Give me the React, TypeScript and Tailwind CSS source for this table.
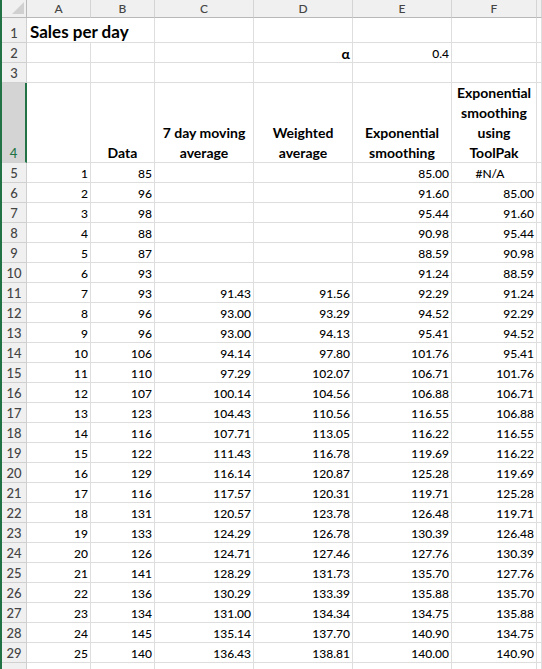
import React from "react"

const cols = ["A", "B", "C", "D", "E", "F", ""]

// day, data, 7 day avg, weighted, exp smoothing, toolpak
const rows: (string | number)[][] = [
  [1, 85, "", "", "85.00", "#N/A"],
  [2, 96, "", "", "91.60", "85.00"],
  [3, 98, "", "", "95.44", "91.60"],
  [4, 88, "", "", "90.98", "95.44"],
  [5, 87, "", "", "88.59", "90.98"],
  [6, 93, "", "", "91.24", "88.59"],
  [7, 93, "91.43", "91.56", "92.29", "91.24"],
  [8, 96, "93.00", "93.29", "94.52", "92.29"],
  [9, 96, "93.00", "94.13", "95.41", "94.52"],
  [10, 106, "94.14", "97.80", "101.76", "95.41"],
  [11, 110, "97.29", "102.07", "106.71", "101.76"],
  [12, 107, "100.14", "104.56", "106.88", "106.71"],
  [13, 123, "104.43", "110.56", "116.55", "106.88"],
  [14, 116, "107.71", "113.05", "116.22", "116.55"],
  [15, 122, "111.43", "116.78", "119.69", "116.22"],
  [16, 129, "116.14", "120.87", "125.28", "119.69"],
  [17, 116, "117.57", "120.31", "119.71", "125.28"],
  [18, 131, "120.57", "123.78", "126.48", "119.71"],
  [19, 133, "124.29", "126.78", "130.39", "126.48"],
  [20, 126, "124.71", "127.46", "127.76", "130.39"],
  [21, 141, "128.29", "131.73", "135.70", "127.76"],
  [22, 136, "130.29", "133.39", "135.88", "135.70"],
  [23, 134, "131.00", "134.34", "134.75", "135.88"],
  [24, 145, "135.14", "137.70", "140.90", "134.75"],
  [25, 140, "136.43", "138.81", "140.00", "140.90"],
]

const cell = "border-r border-b border-[#dedede] flex items-end overflow-visible whitespace-nowrap"
const rowHead = "border-r border-b border-[#d0d0d0] bg-[#f0f0f0] flex items-end justify-center pb-[1px] text-[#444] text-[13px]"

function RowHeader({ n, active }: { n: number | string; active?: boolean }) {
  if (active) {
    return (
      <div className="border-r-2 border-b border-r-[#217346] border-b-[#d0d0d0] bg-[#d4d4d4] flex items-end justify-center text-[#217346] text-[13px] pb-[1px]">
        {n}
      </div>
    )
  }
  return <div className={rowHead}>{n}</div>
}

function Num({ v, center }: { v: string | number; center?: boolean }) {
  return (
    <div className={`${cell} ${center ? "justify-center pr-[8px]" : "justify-end pr-[2px]"}`}>
      {v}
    </div>
  )
}

function Head({ lines }: { lines: string[] }) {
  return (
    <div className={`${cell} justify-center font-bold text-[14px]`}>
      <div className="flex flex-col items-center leading-[20px] mb-[-1px]">
        {lines.map((l) => (
          <span key={l}>{l}</span>
        ))}
      </div>
    </div>
  )
}

export default function App() {
  return (
    <div className="w-[542px] h-[669px] overflow-hidden bg-white flex font-['Lato',sans-serif] font-medium text-[12px] leading-[16px] text-black">
      <div className="w-[2px] bg-[#217346] shrink-0" />
      <div className="grid grid-cols-[25px_64px_64px_99px_99px_99px_85px_1fr] grid-rows-[18px_25px_20px_20px_80px_repeat(26,20px)] flex-1">
        {/* column headers */}
        <div className="border-r border-b border-[#b8b8b8] bg-[#f0f0f0] flex items-end justify-end pr-[2px] pb-[3px]">
          <svg width="12" height="12" viewBox="0 0 12 12">
            <polygon points="0,12 12,12 12,0" fill="#d0d0d0" />
          </svg>
        </div>
        {cols.map((c, i) => (
          <div
            key={i}
            className="border-r border-b border-r-[#d4d4d4] border-b-[#b8b8b8] bg-[#f0f0f0] flex items-center justify-center text-[#444] text-[12px]"
          >
            {c}
          </div>
        ))}

        {/* row 1 */}
        <RowHeader n={1} />
        <div className="border-b border-[#dedede] flex items-end pl-[3px] pb-[2px] font-bold text-[17px] whitespace-nowrap overflow-visible">
          Sales per day
        </div>
        <div className={cell} />
        <div className={cell} />
        <div className={cell} />
        <div className={cell} />
        <div className={cell} />
        <div className={cell} />

        {/* row 2 */}
        <RowHeader n={2} />
        <div className={cell} />
        <div className={cell} />
        <div className={cell} />
        <div className={`${cell} justify-end pr-[2px] font-bold text-[14px]`}>α</div>
        <Num v="0.4" />
        <div className={cell} />
        <div className={cell} />

        {/* row 3 */}
        <RowHeader n={3} />
        {cols.map((_, i) => (
          <div key={i} className={cell} />
        ))}

        {/* row 4 */}
        <RowHeader n={4} active />
        <div className={cell} />
        <Head lines={["Data"]} />
        <Head lines={["7 day moving", "average"]} />
        <Head lines={["Weighted", "average"]} />
        <Head lines={["Exponential", "smoothing"]} />
        <Head lines={["Exponential", "smoothing", "using", "ToolPak"]} />
        <div className={cell} />

        {/* data rows */}
        {rows.map((r, i) => (
          <React.Fragment key={i}>
            <RowHeader n={i + 5} />
            {r.map((v, j) => (
              <Num key={j} v={v} center={v === "#N/A"} />
            ))}
            <div className={cell} />
          </React.Fragment>
        ))}

        {/* row 30 (cut off) */}
        <RowHeader n="" />
        {cols.map((_, i) => (
          <div key={i} className={cell} />
        ))}
      </div>
    </div>
  )
}
